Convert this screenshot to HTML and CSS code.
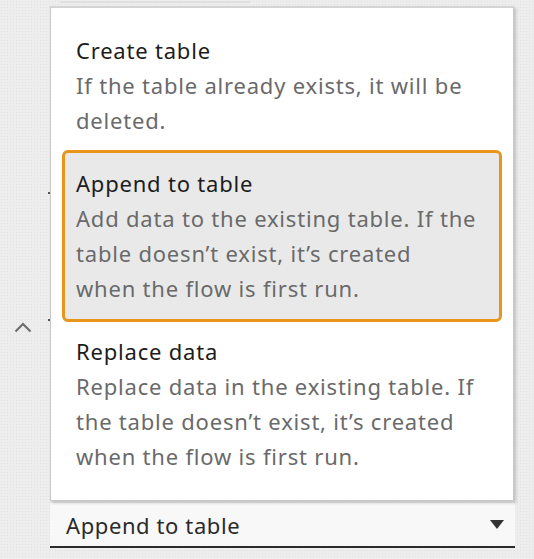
FILE: index.html
```html
<!DOCTYPE html>
<html lang="en">
<head>
<meta charset="utf-8">
<title>Write option</title>
<link rel="stylesheet" href="styles.css">
</head>
<body>
<div class="page">
  <div class="gutter">
    <span class="tick tick-a"></span>
    <svg class="chevron" width="18" height="12" viewBox="0 0 18 12"><path d="M1.5 10.5 L9 3 L16.5 10.5" fill="none" stroke="#6b6b6b" stroke-width="2"/></svg>
    <span class="tick tick-b"></span>
  </div>
  <div class="main">
    <div class="topline"></div>
    <div class="select">
      <span class="select-text">Append to table</span>
      <svg class="caret" width="14" height="10" viewBox="0 0 14 10"><path d="M0 0 H14 L7 9 Z" fill="#333"/></svg>
    </div>
  </div>

  <div class="menu">
    <div class="option">
      <div class="opt-title">Create table</div>
      <div class="opt-desc">If the table already exists, it will be deleted.</div>
    </div>
    <div class="option selected">
      <div class="opt-title">Append to table</div>
      <div class="opt-desc">Add data to the existing table. If the table doesn’t exist, it’s created when&nbsp;the flow is first run.</div>
    </div>
    <div class="option">
      <div class="opt-title">Replace data</div>
      <div class="opt-desc">Replace data in the existing table. If the table doesn’t exist, it’s created when&nbsp;the flow is first run.</div>
    </div>
  </div>
</div>
</body>
</html>
```

FILE: styles.css
```css
html, body {
  margin: 0;
  padding: 0;
}
body {
  background: #ededed;
  font-family: "Noto Sans", "Open Sans", sans-serif;
  width: 534px;
  height: 559px;
  overflow: hidden;
}
.page {
  position: relative;
  display: flex;
  width: 534px;
  height: 559px;
  background-color: #ededed;
  background-image: radial-gradient(#e2e2e2 0.6px, transparent 0.8px);
  background-size: 3px 3px;
}
.gutter {
  width: 50px;
  flex: none;
  position: relative;
}
.chevron {
  position: absolute;
  left: 14px;
  top: 321px;
}
.tick {
  position: absolute;
  left: 48px;
  width: 2px;
  height: 2px;
  background: #555;
}
.tick-a { top: 192px; }
.tick-b { top: 319px; }
.main {
  flex: none;
  width: 465px;
  display: flex;
  flex-direction: column;
  justify-content: space-between;
  padding-top: 1px;
  padding-bottom: 11px;
}
.topline {
  height: 2px;
  margin-left: 10px;
  width: 190px;
  background: #e0e0e0;
}
.select {
  height: 43px;
  background: #f8f8f8;
  border-bottom: 2px solid #2b2b2b;
  display: flex;
  align-items: center;
  justify-content: space-between;
  padding: 0 11px 0 16px;
}
.select-text {
  font-size: 22px;
  letter-spacing: 0.6px;
  color: #2a2a2a;
}
.menu {
  position: absolute;
  left: 50px;
  top: 6px;
  width: 464px;
  box-sizing: border-box;
  background: #fff;
  border: 1px solid #c8c8c8;
  border-top: 2px solid #d4d4d4;
  box-shadow: 2px 2px 3px rgba(0, 0, 0, 0.18);
  padding: 11px 11px 12px 11px;
}
.option {
  border: 3px solid transparent;
  border-radius: 6px;
  padding: 11px 11px;
  line-height: 35px;
  font-size: 22px;
  letter-spacing: 0.8px;
}
.option.selected {
  border-color: #e8961b;
  background: #e9e9e9;
  margin: -2px 0;
  padding: 13px 11px;
}
.opt-title {
  color: #1c1c1c;
}
.opt-desc {
  color: #6a6a6a;
}
```
